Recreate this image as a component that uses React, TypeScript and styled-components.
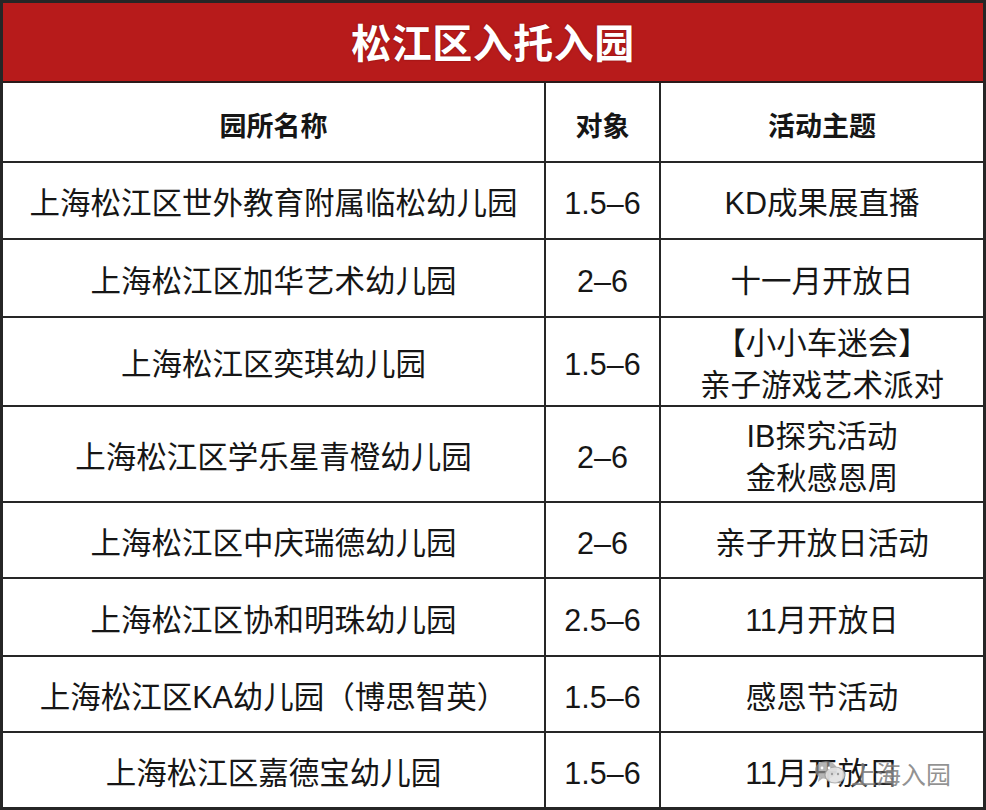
import React from "react";
import styled, { createGlobalStyle } from "styled-components";

const Global = createGlobalStyle`
  html, body { margin: 0; padding: 0; background: #ffffff; }
  * { box-sizing: border-box; }
`;

const Frame = styled.div`
  position: relative;
  width: 986px;
  height: 810px;
  border: 3px solid #262626;
  background: #fff;
  display: flex;
  flex-direction: column;
  font-family: "Liberation Sans", "Noto Sans CJK SC", sans-serif;
  color: #161616;
`;

const TitleBar = styled.div`
  height: 80px;
  background: #b71b1b;
  border-bottom: 2px solid #2a1a1a;
  display: flex;
  align-items: center;
  justify-content: center;
  color: #fff;
  font-family: "Noto Sans CJK SC", sans-serif;
  font-weight: 700;
  font-size: 40px;
  letter-spacing: 0.5px;
  text-shadow: 0 0 2px rgba(90, 0, 0, 0.6);
  padding-bottom: 2px;
`;

const Grid = styled.div`
  flex: 1;
  display: grid;
  grid-template-columns: 543px 115px 1fr;
  grid-template-rows: 80px 77px 78px 89px 96px 76px 78px 76px 1fr;
`;

const Cell = styled.div<{ $last?: boolean; $lastRow?: boolean; $head?: boolean }>`
  display: flex;
  flex-direction: column;
  align-items: center;
  justify-content: center;
  text-align: center;
  border-right: ${(p) => (p.$last ? "none" : "2px solid #262626")};
  border-bottom: ${(p) => (p.$lastRow ? "none" : "2px solid #262626")};
  font-size: ${(p) => (p.$head ? "27px" : "30.5px")};
  font-weight: ${(p) => (p.$head ? 700 : 400)};
  font-family: ${(p) =>
    p.$head ? `"Noto Sans CJK SC", sans-serif` : `"Liberation Sans", "Noto Sans CJK SC", sans-serif`};
  line-height: 42px;
  padding-top: ${(p) => (p.$head ? "6px" : "5px")};
  white-space: nowrap;
`;

const Watermark = styled.div`
  position: absolute;
  left: 810px;
  top: 752px;
  display: flex;
  align-items: center;
  gap: 4px;
  color: rgba(110, 110, 110, 0.75);
  font-family: "Noto Sans CJK SC", sans-serif;
  font-size: 25px;
  text-shadow: 0 0 3px rgba(255, 255, 255, 0.9);
  pointer-events: none;
`;

const rows: { name: string; age: string; topic: string[] }[] = [
  { name: "上海松江区世外教育附属临松幼儿园", age: "1.5–6", topic: ["KD成果展直播"] },
  { name: "上海松江区加华艺术幼儿园", age: "2–6", topic: ["十一月开放日"] },
  { name: "上海松江区奕琪幼儿园", age: "1.5–6", topic: ["【小小车迷会】", "亲子游戏艺术派对"] },
  { name: "上海松江区学乐星青橙幼儿园", age: "2–6", topic: ["IB探究活动", "金秋感恩周"] },
  { name: "上海松江区中庆瑞德幼儿园", age: "2–6", topic: ["亲子开放日活动"] },
  { name: "上海松江区协和明珠幼儿园", age: "2.5–6", topic: ["11月开放日"] },
  { name: "上海松江区KA幼儿园（博思智英）", age: "1.5–6", topic: ["感恩节活动"] },
  { name: "上海松江区嘉德宝幼儿园", age: "1.5–6", topic: ["11月开放日"] },
];

const WeChatIcon = () => (
  <svg width="34" height="28" viewBox="0 0 34 28" fill="none">
    <ellipse cx="13" cy="11" rx="11" ry="9" fill="rgba(150,150,150,0.7)" />
    <path d="M6 18 L5 23 L10 19 Z" fill="rgba(150,150,150,0.7)" />
    <ellipse cx="22" cy="16" rx="10" ry="8" fill="rgba(225,225,225,0.9)" stroke="rgba(150,150,150,0.7)" strokeWidth="1.2" />
    <path d="M27 22 L29 26 L24 23 Z" fill="rgba(150,150,150,0.7)" />
    <circle cx="9" cy="9" r="1.4" fill="#fff" />
    <circle cx="16" cy="9" r="1.4" fill="#fff" />
    <circle cx="19" cy="15" r="1.2" fill="rgba(150,150,150,0.9)" />
    <circle cx="25" cy="15" r="1.2" fill="rgba(150,150,150,0.9)" />
  </svg>
);

export default function App() {
  return (
    <>
      <Global />
      <Frame>
        <TitleBar>松江区入托入园</TitleBar>
        <Grid>
          <Cell $head>园所名称</Cell>
          <Cell $head>对象</Cell>
          <Cell $head $last>活动主题</Cell>
          {rows.map((r, i) => {
            const lastRow = i === rows.length - 1;
            return (
              <React.Fragment key={i}>
                <Cell $lastRow={lastRow}>{r.name}</Cell>
                <Cell $lastRow={lastRow}>{r.age}</Cell>
                <Cell $lastRow={lastRow} $last>
                  {r.topic.map((t, j) => (
                    <div key={j}>{t}</div>
                  ))}
                </Cell>
              </React.Fragment>
            );
          })}
        </Grid>
        <Watermark>
          <WeChatIcon />
          <span>上海入园</span>
        </Watermark>
      </Frame>
    </>
  );
}
